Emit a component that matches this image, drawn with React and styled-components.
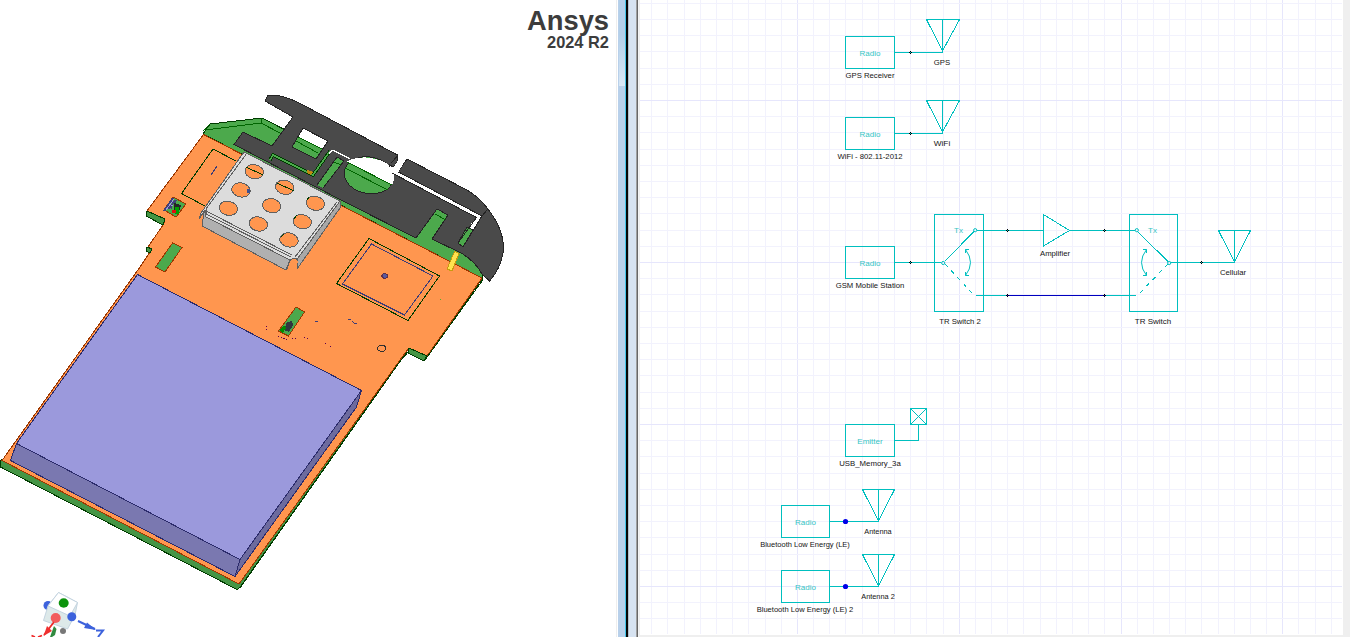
import React from "react";
import styled, { createGlobalStyle } from "styled-components";

const TEAL = "#00bfbf";

const GlobalStyle = createGlobalStyle`
  body {
    margin: 0;
    background: #ffffff;
    font-family: "Liberation Sans", Arial, sans-serif;
  }
`;

const Workspace = styled.div`
  display: flex;
  width: 1350px;
  height: 637px;
  overflow: hidden;
`;

const ModelView = styled.section`
  position: relative;
  box-sizing: border-box;
  width: 617px;
  height: 637px;
  border-right: 1px solid #eeeeee;
  overflow: hidden;
`;

const Drawing = styled.svg`
  display: block;
`;

const Brand = styled.div`
  position: absolute;
  top: 5px;
  right: 7px;
  text-align: right;
  color: #3c3c3c;
  font-weight: bold;
`;

const BrandName = styled.div`
  font-size: 27.3px;
  line-height: 31px;
`;

const BrandRelease = styled.div`
  font-size: 16.4px;
  line-height: 13px;
`;

const Splitter = styled.div`
  display: flex;
  width: 22px;
  padding-left: 1px;
  box-sizing: border-box;
`;

const Strip = styled.div`
  width: ${(p) => p.$w}px;
  background: ${(p) => p.$fill};
`;

const ScrollThumb = styled.div`
  height: 86px;
  margin-left: 1px;
  background: linear-gradient(#b3cfe9 40%, #d9e7f5);
`;

const SchematicPane = styled.section`
  width: 711px;
  box-sizing: border-box;
  padding: 0 7px 2px 1px;
  background: #efefef;
`;

const Canvas = styled.div`
  position: relative;
  width: 703px;
  height: 635px;
  background: #ffffff;
  overflow: hidden;
`;

const Layer = styled.svg`
  position: absolute;
  inset: 0;
`;

const NodeBox = styled.div`
  position: absolute;
  left: ${(p) => p.$x - 640}px;
  top: ${(p) => p.$y}px;
  width: ${(p) => p.$w}px;
  height: 33px;
  box-sizing: border-box;
  border: 1px solid ${TEAL};
  display: flex;
  align-items: center;
  justify-content: center;
  padding-top: 2px;
  color: #35c4c4;
  font-size: 8px;
`;

const Label = styled.div`
  position: absolute;
  left: ${(p) => p.$x - 640}px;
  top: ${(p) => p.$y - 5}px;
  transform: translateX(-50%) scaleX(${(p) => p.$squeeze || 0.965});
  line-height: 11px;
  font-size: 8px;
  white-space: nowrap;
  color: ${(p) => p.$color || "#141414"};
`;

const gridX = Array.from({ length: 43 }, (_, i) => ({
  at: Math.floor(797.4 + 16.18 * (i - 9)),
  major: (i - 9) % 10 === 0,
}));
const gridY = Array.from({ length: 39 }, (_, i) => ({
  at: Math.floor(100.4 + 16.2 * (i - 6)),
  major: (i - 6) % 10 === 0,
}));

function Grid() {
  const ordered = (list) => [...list].sort((a, b) => a.major - b.major);
  return (
    <g shapeRendering="crispEdges">
      {ordered(gridX).map((l) => (
        <rect key={l.at} x={l.at} y="0" width="1" height="634" fill={l.major ? "#e6e6fc" : "#f2f2fd"} />
      ))}
      {ordered(gridY).map((l) => (
        <rect key={l.at} x="640" y={l.at} width="702" height="1" fill={l.major ? "#e6e6fc" : "#f2f2fd"} />
      ))}
    </g>
  );
}

const Antenna = ({ x, y, half = 16 }) => (
  <path d={`M${x - 16} ${y + 0.5}H${x + half + 1}M${x + 0.5} ${y}V${y + 33}M${x - 15.5} ${y + 0.5}L${x + 0.5} ${y + 32}L${x + half + 0.5} ${y + 0.5}`} />
);

const Joint = ({ x, y }) => (
  <path d={`M${x + 0.5} ${y - 1}V${y}M${x + 0.5} ${y + 1}V${y + 2}M${x - 1} ${y + 0.5}H${x}M${x + 1} ${y + 0.5}H${x + 2}`} stroke="#000000" />
);

function Wiring() {
  return (
    <g fill="none" stroke={TEAL} strokeWidth="1" shapeRendering="crispEdges">
      <Antenna x={942} y={19} half={17} />
      <Antenna x={942} y={100} half={17} />
      <Antenna x={1234} y={230} />
      <Antenna x={878} y={489} />
      <Antenna x={878} y={554} />
      <path d="M895 52.5H943M895 133.5H943M895 262.5H941M830 521.5H879M830 586.5H879" />
      <path d="M895 440.5H918.5V424" />
      <rect x="910.5" y="408.5" width="16" height="16" />
      <path d="M911 409L926 424M926 409L911 424" />

      <rect x="934.5" y="214.5" width="49" height="97" />
      <rect x="1129.5" y="214.5" width="48" height="97" />
      <path d="M977 230.5H1043M1069 230.5H1135M1171 262.5H1235" />
      <path d="M976 295.5H1007M1105 295.5H1136" />
      <path d="M1007 295.5H1105" stroke="#0000bf" />
      <path d="M1043.5 214.5V246L1069.5 230.5Z" />
      <path d="M945 261L974 231.5M1138 232L1168 261.5" />
      <path d="M945 264L974 295M1168 264L1138 295" strokeDasharray="4 5" />
      <g shapeRendering="auto">
        <circle cx="943.2" cy="263" r="1.6" />
        <circle cx="975.2" cy="230.2" r="1.6" />
        <circle cx="1136.8" cy="230.2" r="1.6" />
        <circle cx="1169.2" cy="263" r="1.6" />
        <path d="M965.5 249.5Q975.5 262.5 965.5 275.5M965.5 253V249.5H969M965.5 272V275.5H969" />
        <path d="M1146.5 249.5Q1136.5 262.5 1146.5 275.5M1146.5 253V249.5H1143M1146.5 272V275.5H1143" />
      </g>
      {[[910, 52], [910, 133], [910, 262], [1007, 230], [1104, 230], [1007, 295], [1104, 295], [1201, 262]].map(([x, y]) => (
        <Joint key={`${x}-${y}`} x={x} y={y} />
      ))}
      <g fill="#0000e8" stroke="none" shapeRendering="auto">
        <circle cx="845.5" cy="521.5" r="2.6" />
        <circle cx="845.5" cy="586.5" r="2.6" />
      </g>
    </g>
  );
}

const nodes = [
  { x: 845, y: 36, w: 50, text: "Radio" },
  { x: 845, y: 117, w: 50, text: "Radio" },
  { x: 845, y: 246, w: 50, text: "Radio" },
  { x: 845, y: 424, w: 50, text: "Emitter" },
  { x: 781, y: 505, w: 49, text: "Radio" },
  { x: 781, y: 570, w: 49, text: "Radio" },
];

const labels = [
  { x: 869.5, y: 75, text: "GPS Receiver" },
  { x: 942, y: 62, text: "GPS" },
  { x: 869.5, y: 156, text: "WiFi - 802.11-2012" },
  { x: 941.5, y: 143, text: "WiFi", squeeze: 1.03 },
  { x: 870, y: 285, text: "GSM Mobile Station" },
  { x: 959.5, y: 321, text: "TR Switch 2" },
  { x: 1055, y: 253, text: "Amplifier" },
  { x: 1153, y: 321, text: "TR Switch", squeeze: 1 },
  { x: 1233, y: 272, text: "Cellular" },
  { x: 869.5, y: 463, text: "USB_Memory_3a", squeeze: 0.975 },
  { x: 877.5, y: 531, text: "Antenna", squeeze: 0.92 },
  { x: 805, y: 544, text: "Bluetooth Low Energy (LE)", squeeze: 0.937 },
  { x: 877.5, y: 596, text: "Antenna 2", squeeze: 0.92 },
  { x: 805, y: 609, text: "Bluetooth Low Energy (LE) 2", squeeze: 0.945 },
];

function Schematic() {
  return (
    <Canvas>
      <Layer width="703" height="635" viewBox="640 0 703 635">
        <Grid />
        <Wiring />
      </Layer>
      {nodes.map((n) => (
        <NodeBox key={`${n.x}-${n.y}`} $x={n.x} $y={n.y} $w={n.w}>
          {n.text}
        </NodeBox>
      ))}
      {labels.map((l) => (
        <Label key={l.text} $x={l.x} $y={l.y} $squeeze={l.squeeze}>
          {l.text}
        </Label>
      ))}
      <Label $x={958.5} $y={230} $color="#35c4c4" $squeeze={1}>Tx</Label>
      <Label $x={1152.5} $y={230} $color="#35c4c4" $squeeze={1}>Tx</Label>
    </Canvas>
  );
}

const GREEN = "#4ca94c";
const ORANGE = "#ff964f";
const METAL = "#4a4a4a";

const shieldHoles = [
  [254.3, 171.7], [284.7, 187.3], [315.3, 203.3],
  [241, 190], [271.7, 205.7], [302.3, 221.7],
  [228.3, 208.3], [258.3, 224], [289, 240],
];

function Board() {
  return (
    <g>
      <path fill="#459545" stroke="#003c00" d="M2 459.5L0.5 461V467L237 589.5L240 587.5L400 361L408 350L424 361L427 357L482 279L481 275Z" />
      <path fill={GREEN} stroke="#003c00" d="M203 134L210 124L262 118L482 231V278Z" />
      <path fill="none" stroke="#006400" d="M203 131L210 124M205 130L261 123L392 192M262 118L261 123" />
      <path fill={ORANGE} stroke="#9c3700" d="M203.5 134.5L482 278L427 356L409 348L400 360L239 584L2 460.5L140 267L150 252L148 247L163 225L165 220L147 211Z" />
      <path fill="#459545" stroke="#003c00" d="M147 211L165 219L163 225L146 216ZM147 247L152 249L150 253L146 251ZM409 348L427 356L424 361L408 353Z" />
      <path fill="none" stroke="#003c00" d="M240 588L401 360L409 351M425 360L482 281V271" />
      <path fill="none" stroke="#003c00" d="M236 161L213 149L181.5 193.5L205 206" />
      <path fill="none" stroke="#3c3c78" d="M217 166L211 175" />
      <path fill={GREEN} stroke="#9c3700" d="M172.5 243L182 247.5L165 272L155.5 267ZM296 307L304.5 312L288.5 336L278.5 331Z" />
    </g>
  );
}

function MetalFrame() {
  return (
    <g>
      <path
        fill={METAL}
        stroke="#242424"
        d="M268 95.5C278 94 292 99 303 105L397.5 155V161L394 166.5L389 165L398 172L407 159L467 190Q479 197 488 209Q504 230 503.5 249Q502 267 489.5 281L482 274Q475 261 461 253L432 239L448 215L437 209L416 238L341 200L234 144.5L243 132L272 146L293 117L265 101Z"
      />
      <g>
        <path fill="#ffffff" d="M303 128L328 141L322 149L298 137Z" />
        <path fill={GREEN} d="M298 137L322 149L316 159L292 147Z" />
        <path fill="none" stroke="#242424" d="M303 128L328 141L316 159L292 147Z" />
        <path fill="none" stroke="#006400" d="M298 137L322 149M296 141L318 153" />
      </g>
      <path fill="none" stroke="#003c00" strokeWidth="3.4" d="M270 160L273 155L313 175L330 151" />
      <path fill="none" stroke={GREEN} strokeWidth="1.6" d="M270 160L273 155L313 175L330 151" />
      <path fill="none" stroke="#ffffff" strokeWidth="1.3" d="M329 154L332 150L350 158.5" />
      <path fill="#c08a10" d="M307 170L313 172L311 175L307 173Z" />
      <path fill={GREEN} d="M337 157L344 161L323 188L317 185Z" />
      <path fill="none" stroke="#242424" d="M317 185L337 157L344 161L323 188" />
      <path fill="none" stroke="#006400" d="M334 162L341 165" />
      <g>
        <ellipse cx="369" cy="175.300" rx="25" ry="18.3" transform="rotate(10 369 175)" fill={GREEN} stroke="#242424" />
        <path fill="#ffffff" d="M346 162Q354 157 366 157.5Q382 159 389 165L393.5 173L394 180L392 185Z" />
        <path fill="none" stroke="#006400" d="M347 162L392 185M345 168L388 190" />
      </g>
      <path fill="#ffffff" d="M388.5 166L394 167L398 160L404 162L398.5 172L482 216L471 233L466 230L476.5 217.5L392 173Z" />
      <path fill={GREEN} stroke="#242424" d="M473 230L467 227L458 243L463 247Z" />
      <path fill="none" stroke="#242424" d="M398.5 172L482 216L488 209M392 173L476.5 217.5L458 243L463 247L482 216M389 164L390 167M397.500 156L391 163" />
      <path fill="none" stroke="#006400" d="M435 214L446 220" />
      <path fill="#ffe34f" stroke="#c89a10" d="M454.5 251.5L459 253.5L452 271L447 269Z" />
    </g>
  );
}

function Shield() {
  return (
    <g>
      <path fill="#b0b0b0" stroke="#606060" d="M204 212L202 226L286 270L290 260Z" />
      <path fill="#a8a8a8" d="M340 201V208L297 269V259Z" />
      <path fill="#dcdcdc" stroke="#606060" d="M244 152L340 201L298 258L290 260L206 217L205 210L199 219L201 213Z" />
      <path fill="none" stroke="#606060" d="M340 201V208L297 269V259M247 153L206 209V214L291 257M206 211L292 255M337 202L295 257" />
      <path fill={ORANGE} d="M289.5 262Q294 256 298 261L296 268L287.5 270Z" />
      <path fill="none" stroke="#606060" d="M286.5 270L289.5 261Q294 256 298 260" />
      {shieldHoles.map(([x, y]) => (
        <ellipse key={`${x}-${y}`} cx={x} cy={y} rx="9.3" ry="7" transform={`rotate(12 ${x} ${y})`} fill={ORANGE} stroke="#606060" />
      ))}
      <path fill="none" stroke="#003c00" d="M246 167L263 175M277 183L294 191M307 200L309 197M294 219L297 215M281 237L284 234" />
      <path fill="#3c5090" d="M247 189H250V193H247Z" />
    </g>
  );
}

function Components() {
  return (
    <g>
      <path fill={GREEN} stroke="#9c3700" d="M173 197L186 204L176 217L164 210Z" />
      <path fill="none" stroke="#404078" strokeWidth="2" d="M173 198L164 211M176 200L168 209M172 201L176 204M168 206L172 208" />
      <path fill="none" stroke="#9b99dc" d="M174 199L166 210M169 204L173 206" />
      <path fill="#252525" d="M174 203L181 205L180 210L174 210Z" />
      <path fill="#00a000" d="M175 207H179V214H175Z" />
      <path fill="#e01010" d="M172 210H176V213H172Z" />
      <path fill="#303840" d="M287 322L292 321L293 325L289 332L284 330Z" />
      <path fill="#008c00" d="M279 330L284 325L286 328L283 333Z" />

      <path fill="none" stroke="#003c00" d="M369 238.5L439.5 276L408 320.5L336.5 283.5Z" />
      <path fill="none" stroke="#3c3c78" d="M371.5 244L433 276L404.5 315L342.5 284Z" />
      <ellipse cx="384.7" cy="276" rx="2.8" ry="2.3" fill="#5a5aa0" stroke="#60304a" />
      <ellipse cx="381.7" cy="348.3" rx="4" ry="3" fill="none" stroke="#303030" />
      <path fill="none" stroke="#3c3c78" d="M348 319L351 320M352 321L354 323L357 323M315 321L318 322" />
      <path fill="none" stroke="#5a0050" strokeDasharray="1 2" d="M266 326V330M278 336L287 340M292 338H298M304 337L310 339M325 343L332 348" />
      <path fill="#50b030" d="M440 299H441V300H440Z" />

      <path fill="#9b99dc" stroke="#2c2c6c" d="M137.5 274.5L361.5 390.5L240 559.5L16.5 443.5Z" />
      <path fill="#7a78b0" stroke="#2c2c6c" d="M16.5 443.5L240 559.5L235 576.5L10.5 460.5Z" />
      <path fill="#6d6b9e" stroke="#2c2c6c" d="M361.5 390.5L356.5 407L235 576.5L240 559.5Z" />
    </g>
  );
}

function AxisTriad() {
  return (
    <g shapeRendering="auto">
      <circle cx="48" cy="605.5" r="4.5" fill="#3d62dc" />
      <circle cx="63" cy="631" r="3" fill="#777777" />
      <path fill="#dde9e9" stroke="#c4d4e0" d="M58.5 592.5L77.5 602.5L75 615L67.5 629L43.5 620.5L48 606Z" />
      <path fill="#ffffff" stroke="#c4d4e0" d="M58.5 592.5L77.5 602.5L70 616L48 606Z" />
      <ellipse cx="63.7" cy="603" rx="5" ry="4.7" fill="#0c930c" />
      <circle cx="71.8" cy="616.7" r="4.5" fill="#3d62dc" />
      <circle cx="55.7" cy="618" r="5" fill="#f25c5c" />
      <path fill="none" stroke="#ef2929" strokeWidth="1.8" d="M54 622L44 635M31.5 635.500L35 637M38 637L42 635.500" />
      <path fill="#ef3030" d="M47 626L52 631L43.5 636Z" />
      <path fill="#318a40" d="M54 626L56.5 629L55 635L52 637H50Z" />
      <path fill="none" stroke="#3d62dc" strokeWidth="2" d="M78 621L95 629M96 630.5H103L98 637" />
      <path fill="#3d62dc" d="M87 622.5L96 630L84 628Z" />
    </g>
  );
}

export default function App() {
  return (
    <>
      <GlobalStyle />
      <Workspace>
        <ModelView>
          <Drawing width="616" height="637" viewBox="0 0 616 637" shapeRendering="crispEdges">
            <Board />
            <MetalFrame />
            <Shield />
            <Components />
            <AxisTriad />
          </Drawing>
          <Brand>
            <BrandName>Ansys</BrandName>
            <BrandRelease>2024 R2</BrandRelease>
          </Brand>
        </ModelView>
        <Splitter>
          <Strip $w={7} $fill="#b8d0ea">
            <ScrollThumb />
          </Strip>
          <Strip $w={1} $fill="#42c4e8" />
          <Strip $w={2} $fill="#050505" />
          <Strip $w={1} $fill="#b4bec8" />
          <Strip $w={7} $fill="#d7e3f1" />
          <Strip $w={1} $fill="#a0a0a0" />
          <Strip $w={1} $fill="#686868" />
          <Strip $w={1} $fill="#f4f4f4" />
        </Splitter>
        <SchematicPane>
          <Schematic />
        </SchematicPane>
      </Workspace>
    </>
  );
}
